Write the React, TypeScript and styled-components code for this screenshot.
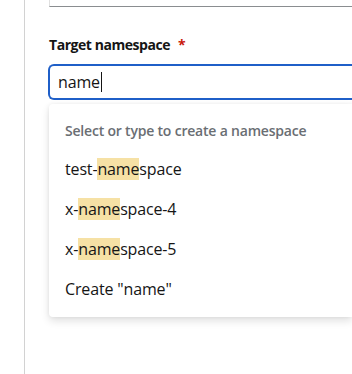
import React from "react";
import styled, { createGlobalStyle } from "styled-components";

const Global = createGlobalStyle`
  html, body { margin: 0; padding: 0; background: #fff; }
  body { font-family: "Open Sans", "Noto Sans", sans-serif; color: #151515; }
`;

const Page = styled.div`
  display: flex;
  height: 374px;
  overflow: hidden;
`;

const Rail = styled.div`
  width: 24px;
  flex: none;
  border-right: 1px solid #d2d2d2;
`;

const Content = styled.div`
  flex: 1;
  padding-left: 24px;
  min-width: 0;
`;

const PrevField = styled.div`
  height: 6px;
  border-left: 1px solid #e0e0e0;
  border-bottom: 1px solid #8a8d90;
`;

const FormGroup = styled.div`
  margin-top: 27px;
  display: flex;
  flex-direction: column;
`;

const Label = styled.label`
  font-size: 14px;
  font-weight: 700;
  line-height: 21px;
  letter-spacing: -0.45px;
  display: flex;
  gap: 8px;
`;

const Required = styled.span`
  color: #c9190b;
`;

const InputBox = styled.div`
  margin-top: 9px;
  height: 36px;
  box-sizing: border-box;
  border: 2px solid #1f5fc8;
  border-right: none;
  border-radius: 6px 0 0 6px;
  margin-left: -1px;
  padding: 0 8px;
  display: flex;
  align-items: center;
  font-size: 16px;
  letter-spacing: -0.15px;
`;

const Caret = styled.span`
  display: inline-block;
  width: 1px;
  height: 20px;
  background: #151515;
  margin-left: 1px;
`;

const Menu = styled.div`
  margin-top: 4px;
  background: #fff;
  border-radius: 4px 0 0 4px;
  box-shadow: 0 4px 8px rgba(3, 3, 3, 0.12), 0 0 4px rgba(3, 3, 3, 0.06);
  padding: 8px 0;
`;

const GroupTitle = styled.div`
  padding: 8px 16px;
  font-size: 14px;
  font-weight: 600;
  line-height: 21px;
  letter-spacing: -0.2px;
  color: #6a6e73;
`;

const Item = styled.div`
  height: 40px;
  padding: 0 16px;
  display: flex;
  align-items: center;
  font-size: 16px;
  letter-spacing: -0.15px;
  white-space: pre;
`;

const Mark = styled.mark`
  background: #f6e1a5;
  color: inherit;
  padding: 0;
`;

const highlight = (text: string, q: string) => {
  const i = text.indexOf(q);
  if (i < 0) return text;
  return (
    <>
      {text.slice(0, i)}
      <Mark>{text.slice(i, i + q.length)}</Mark>
      {text.slice(i + q.length)}
    </>
  );
};

export default function App() {
  const q = "name";
  const items = ["test-namespace", "x-namespace-4", "x-namespace-5"];
  return (
    <>
      <Global />
      <Page>
        <Rail />
        <Content>
          <PrevField />
          <FormGroup>
            <Label>
              Target namespace <Required>*</Required>
            </Label>
            <InputBox>
              {q}
              <Caret />
            </InputBox>
            <Menu>
              <GroupTitle>Select or type to create a namespace</GroupTitle>
              {items.map((t) => (
                <Item key={t}>{highlight(t, q)}</Item>
              ))}
              <Item>Create "name"</Item>
            </Menu>
          </FormGroup>
        </Content>
      </Page>
    </>
  );
}
